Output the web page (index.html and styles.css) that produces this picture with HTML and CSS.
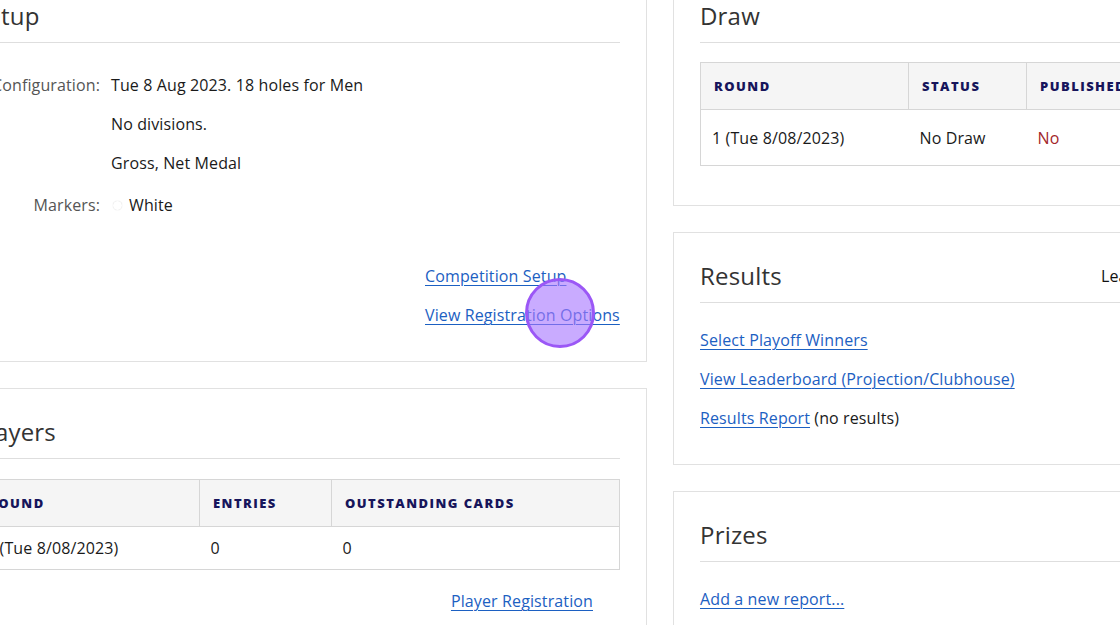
FILE: index.html
```html
<!DOCTYPE html>
<html lang="en">
<head>
<meta charset="utf-8">
<title>Competition</title>
<link rel="stylesheet" href="styles.css">
</head>
<body>
<div class="page">
  <div class="column">
    <section class="panel panel-setup">
      <div class="panel-head"><h2>Setup</h2></div>
      <div class="setup-grid">
        <div class="label">Configuration:</div>
        <div class="values">
          <div>Tue 8 Aug 2023. 18 holes for Men</div>
          <div>No divisions.</div>
          <div>Gross, Net Medal</div>
        </div>
        <div class="label markers-label">Markers:</div>
        <div class="markers"><span class="swatch"></span>White</div>
      </div>
      <div class="setup-links">
        <a href="#">Competition Setup</a>
        <a href="#">View Registration Options</a>
      </div>
    </section>
    <section class="panel panel-players">
      <div class="panel-head"><h2>Players</h2></div>
      <table class="grid-table players-table">
        <thead>
          <tr><th class="c-round">Round</th><th class="c-entries">Entries</th><th>Outstanding Cards</th></tr>
        </thead>
        <tbody>
          <tr><td>1 (Tue 8/08/2023)</td><td>0</td><td>0</td></tr>
        </tbody>
      </table>
      <div class="players-link"><a href="#">Player Registration</a></div>
    </section>
  </div>
  <div class="column">
    <section class="panel panel-draw">
      <div class="panel-head"><h2>Draw</h2></div>
      <table class="grid-table draw-table">
        <thead>
          <tr><th class="c-dround">Round</th><th class="c-status">Status</th><th>Published</th></tr>
        </thead>
        <tbody>
          <tr><td>1 (Tue 8/08/2023)</td><td>No Draw</td><td class="no">No</td></tr>
        </tbody>
      </table>
    </section>
    <section class="panel panel-results">
      <div class="panel-head head-row"><h2>Results</h2><span class="head-extra">Leaderboard</span></div>
      <div class="link-list">
        <div><a href="#">Select Playoff Winners</a></div>
        <div><a href="#">View Leaderboard (Projection/Clubhouse)</a></div>
        <div><a href="#">Results Report</a> (no results)</div>
      </div>
    </section>
    <section class="panel panel-prizes">
      <div class="panel-head"><h2>Prizes</h2></div>
      <div class="link-list">
        <div><a href="#">Add a new report...</a></div>
      </div>
    </section>
  </div>
</div>
<div class="cursor-dot"></div>
</body>
</html>
```

FILE: styles.css
```css
html, body {
  margin: 0;
  padding: 0;
  overflow: hidden;
  background: #ffffff;
}

body {
  font-family: "Open Sans", "Liberation Sans", sans-serif;
  font-size: 16px;
  line-height: 24px;
  letter-spacing: 0.12px;
  color: #1a1a1a;
  width: 1120px;
  height: 625px;
  position: relative;
}

a {
  color: #1c60c2;
  text-decoration: underline;
  text-underline-offset: 3px;
  text-decoration-thickness: 1px;
}

.page {
  display: grid;
  grid-template-columns: 700px 698px;
  column-gap: 26px;
  margin-left: -53px;
  margin-top: -28px;
  width: 1424px;
}

.column {
  display: flex;
  flex-direction: column;
  gap: 26px;
}

.panel {
  border: 1px solid #e1e1e1;
  background: #fff;
  padding: 0 26px;
}

.panel-head {
  padding-top: 26px;
  padding-bottom: 9px;
  border-bottom: 1px solid #dedede;
}

.panel-head h2 {
  margin: 0;
  font-size: 24px;
  line-height: 34px;
  font-weight: 400;
  color: #333333;
  letter-spacing: 0.2px;
}

.head-row {
  display: flex;
  align-items: center;
}

.head-extra {
  margin-left: auto;
  width: 243px;
  color: #111;
  white-space: nowrap;
  overflow: hidden;
}

/* Setup */
.panel-setup {
  height: 388px;
  box-sizing: content-box;
}

.setup-grid {
  display: grid;
  grid-template-columns: 126px 1fr;
  column-gap: 11px;
  row-gap: 18px;
  margin-top: 30px;
}

.label {
  text-align: right;
  color: #555555;
}

.values {
  display: flex;
  flex-direction: column;
  gap: 15px;
}

.markers {
  display: flex;
  align-items: center;
}

.swatch {
  display: inline-block;
  width: 9px;
  height: 9px;
  border-radius: 50%;
  background: #ffffff;
  box-shadow: 0 0 1px rgba(0, 0, 0, 0.22);
  margin-left: 2px;
  margin-right: 7px;
}

.setup-links {
  display: flex;
  flex-direction: column;
  gap: 15px;
  width: 195px;
  margin-left: auto;
  margin-top: 47px;
}

/* tables */
.grid-table {
  width: 100%;
  border-collapse: collapse;
  margin-top: 19px;
  border: 1px solid #d6d6d6;
}

.grid-table th {
  background: #f5f5f5;
  color: #17155b;
  font-size: 13px;
  font-weight: 800;
  letter-spacing: 1.45px;
  text-transform: uppercase;
  text-align: left;
  padding: 0 13px;
  height: 46px;
  border: 1px solid #d6d6d6;
  line-height: 18px;
}

.grid-table td {
  padding: 0 11px;
  text-align: left;
  border-top: 1px solid #d6d6d6;
}

.players-table {
  margin-top: 20px;
}

.players-table td {
  height: 42px;
}

.draw-table td {
  height: 55px;
}

.c-round { width: 198px; }
.c-entries { width: 105px; }
.c-dround { width: 181px; }
.c-status { width: 91px; }

.no {
  color: #a3262a;
}

.players-link {
  text-align: right;
  padding-right: 27px;
  margin-top: 19px;
  padding-bottom: 20px;
}

/* Draw */
.panel-draw {
  padding-bottom: 39px;
}

/* Results */
.link-list {
  display: flex;
  flex-direction: column;
  gap: 15px;
  margin-top: 25px;
}

.panel-results {
  padding-bottom: 34px;
}

.panel-prizes {
  padding-bottom: 40px;
}

.cursor-dot {
  position: absolute;
  left: 525px;
  top: 278px;
  width: 64px;
  height: 64px;
  border-radius: 50%;
  border: 3px solid #9b57f6;
  background: rgba(168, 120, 255, 0.62);
}
```
